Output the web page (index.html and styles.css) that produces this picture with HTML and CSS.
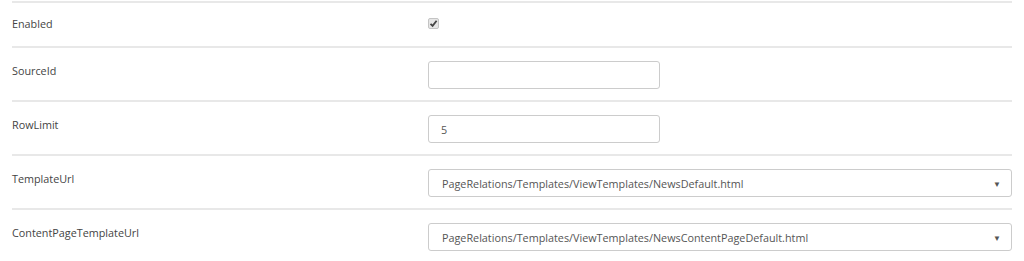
FILE: index.html
```html
<!DOCTYPE html>
<html lang="en">
<head>
    <meta charset="UTF-8">
    <meta name="viewport" content="width=device-width, initial-scale=1.0">
    <title>Settings</title>
    <link rel="stylesheet" href="styles.css">
</head>
<body>
    <!-- Widget settings -->
    <div class="settings">
        <div class="row row-first">
            <label class="field-label">Enabled</label>
            <div class="field">
                <span class="check-box">
                    <svg width="9" height="9" viewBox="0 0 9 9"><path d="M1.5 4.8 L3.6 6.9 L7.6 1.8" fill="none" stroke="#444" stroke-width="1.8"/></svg>
                </span>
            </div>
        </div>

        <div class="row">
            <label class="field-label">SourceId</label>
            <div class="field">
                <input class="text-input" type="text" value="">
            </div>
        </div>

        <div class="row">
            <label class="field-label">RowLimit</label>
            <div class="field">
                <input class="text-input" type="text" value="5">
            </div>
        </div>

        <div class="row">
            <label class="field-label">TemplateUrl</label>
            <div class="field">
                <div class="select-wrap">
                    <select class="select-input">
                        <option>PageRelations/Templates/ViewTemplates/NewsDefault.html</option>
                    </select>
                    <span class="select-arrow">&#9660;</span>
                </div>
            </div>
        </div>

        <div class="row">
            <label class="field-label">ContentPageTemplateUrl</label>
            <div class="field">
                <div class="select-wrap">
                    <select class="select-input">
                        <option>PageRelations/Templates/ViewTemplates/NewsContentPageDefault.html</option>
                    </select>
                    <span class="select-arrow">&#9660;</span>
                </div>
            </div>
        </div>
    </div>
</body>
</html>
```

FILE: styles.css
```css
/* Page */
body {
    margin: 0;
    padding: 1px 0 0 0;
    font-family: 'Open Sans', 'Noto Sans', sans-serif;
    font-size: 10.8px;
    color: #444;
    background: #fff;
}

.settings {
    margin: 0 12px;
    width: 1000px;
}

/* Each setting row */
.row {
    display: grid;
    grid-template-columns: 416px 584px;
    border-top: 2px solid #e8e8e8;
    padding: 13px 0 11px;
}

.row-first {
    padding: 12px 0 13px;
}

.field-label {
    line-height: 20px;
}

.row-first .field-label {
    line-height: 18px;
}

.field {
    display: flex;
    align-items: flex-start;
}

/* Fake checked checkbox (greyed look) */
.check-box {
    display: inline-flex;
    align-items: center;
    justify-content: center;
    width: 9px;
    height: 9px;
    margin-top: 3px;
    border: 1px solid #c4c4c4;
    border-radius: 2px;
    background: #e6e6e6;
}

/* Text inputs */
.text-input {
    box-sizing: border-box;
    width: 232px;
    height: 28px;
    padding: 0 12px;
    font-family: inherit;
    font-size: 10.8px;
    color: #555;
    border: 1px solid #ccc;
    border-radius: 3px;
    outline: none;
}

/* Selects */
.select-wrap {
    position: relative;
    width: 584px;
}

.select-input {
    -webkit-appearance: none;
    appearance: none;
    box-sizing: border-box;
    width: 100%;
    height: 28px;
    padding: 0 30px 0 13px;
    font-family: inherit;
    font-size: 10.8px;
    color: #555;
    background: #fff;
    border: 1px solid #ccc;
    border-radius: 3px;
    outline: none;
}

.select-arrow {
    position: absolute;
    right: 11px;
    top: 9px;
    font-size: 8px;
    color: #555;
    pointer-events: none;
}
```
